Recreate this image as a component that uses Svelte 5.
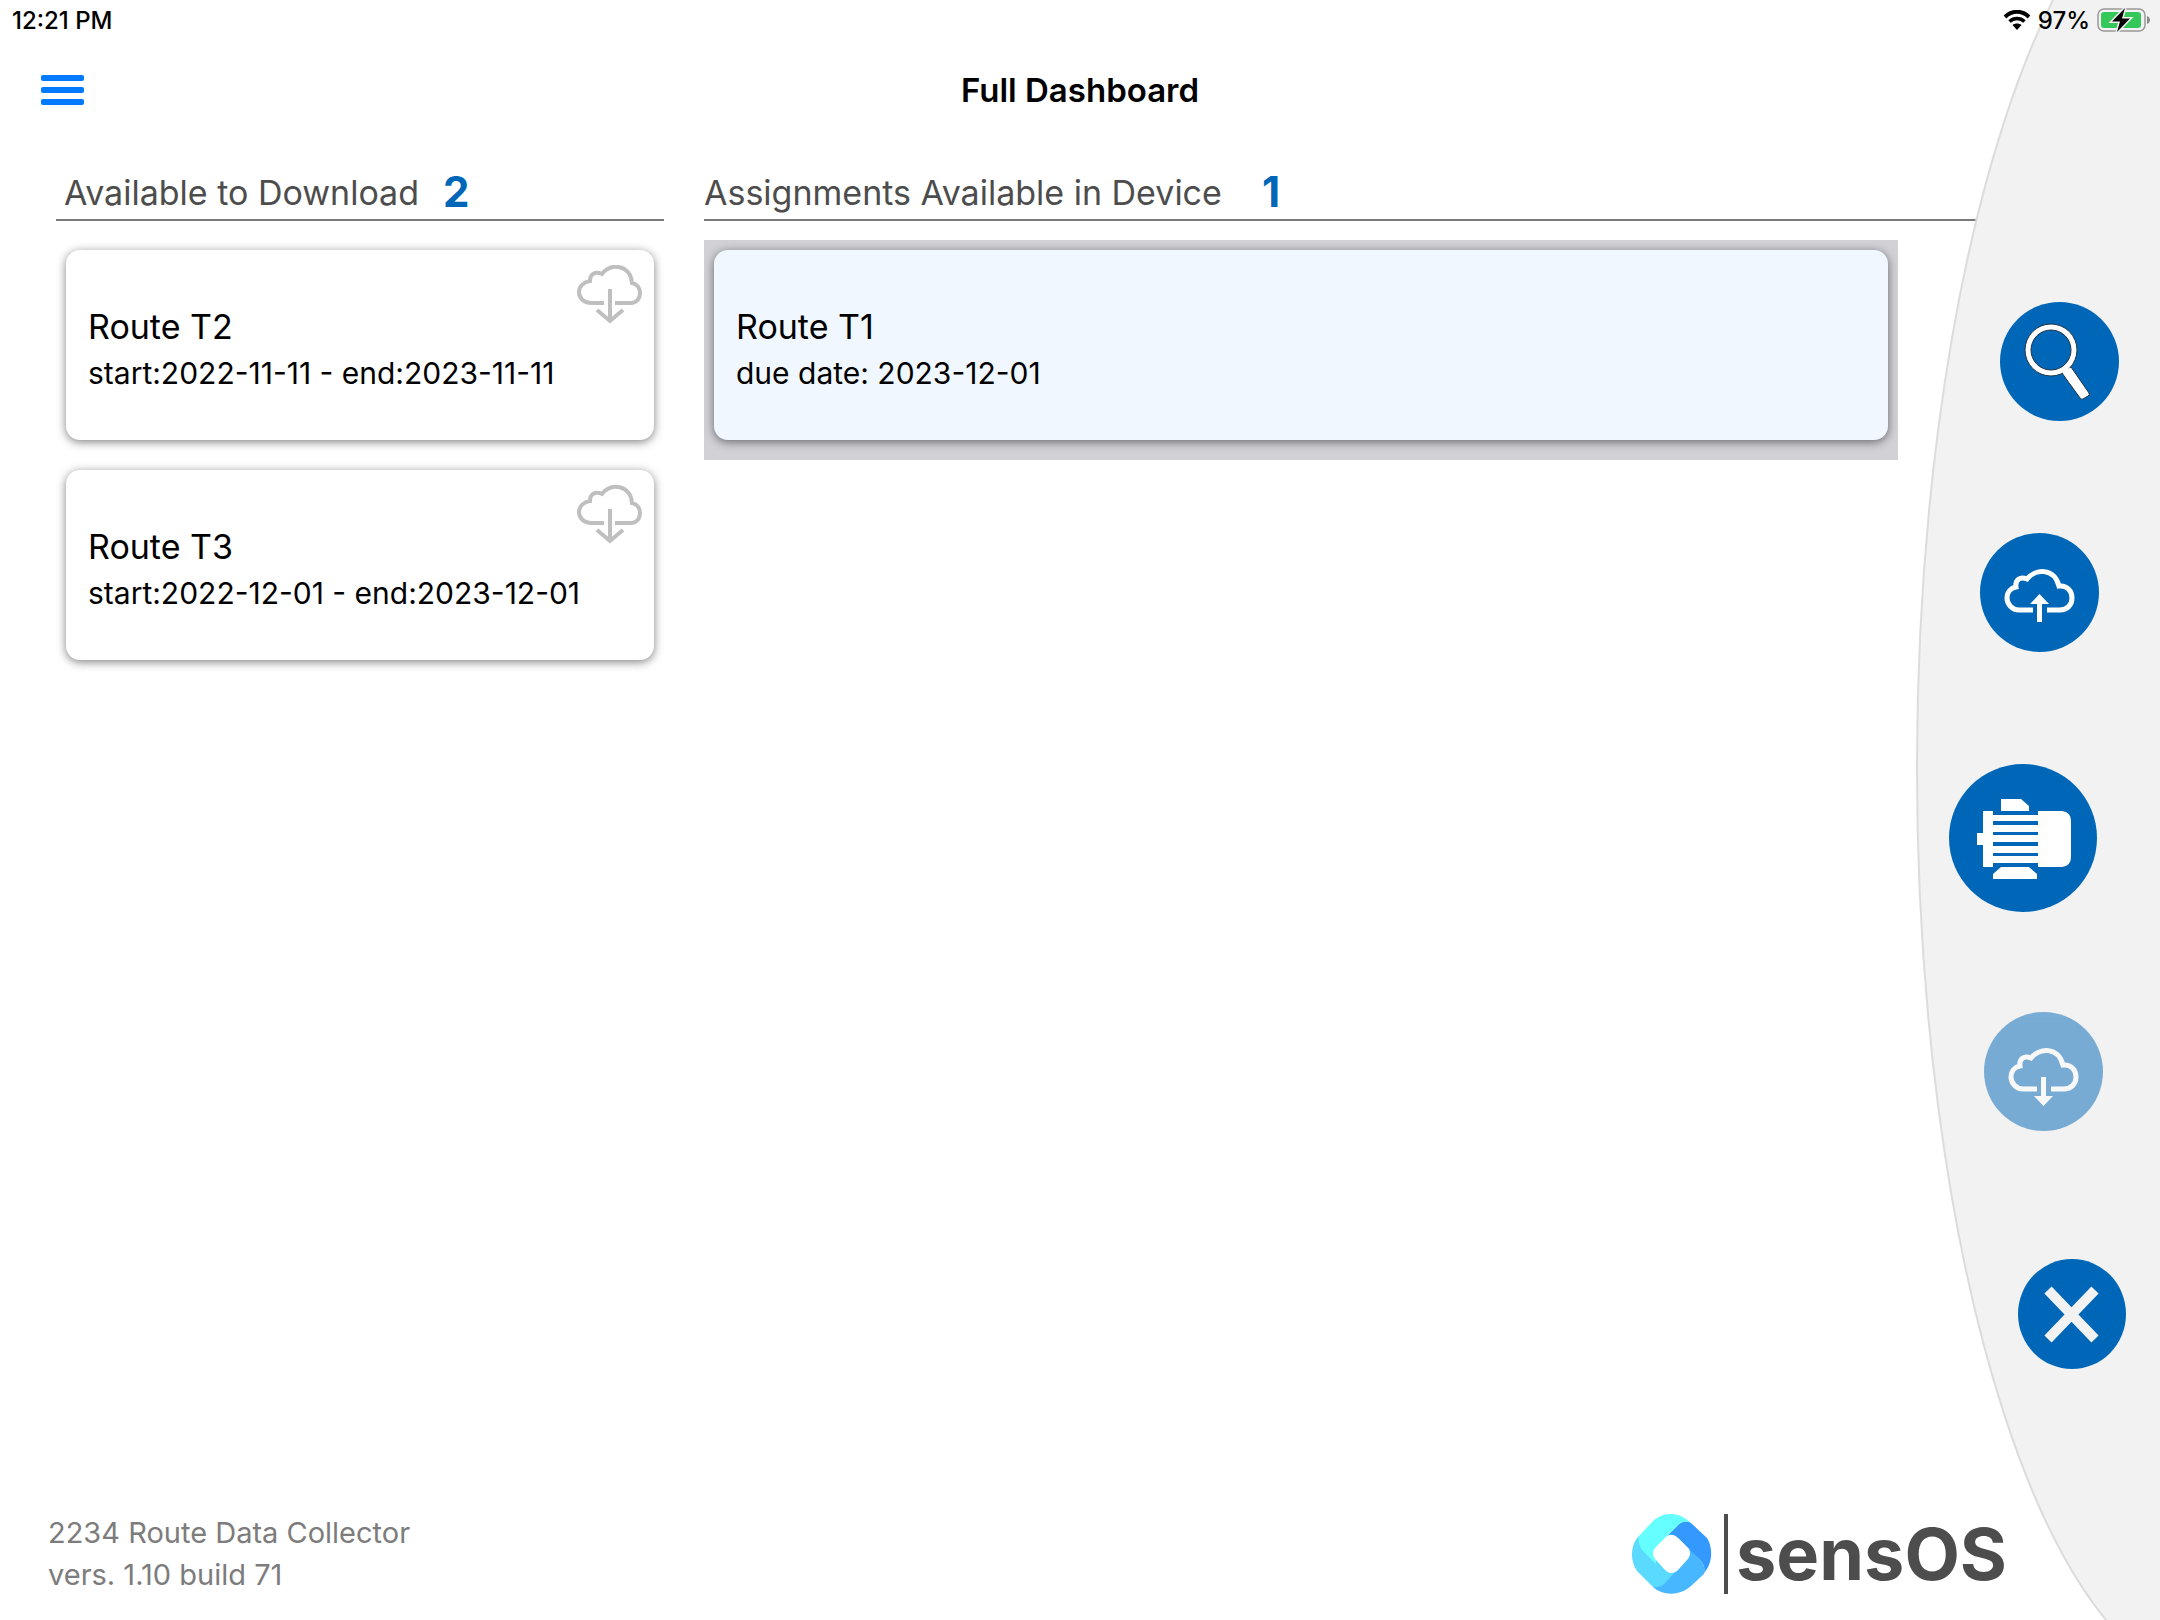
<script>
  let downloads = [
    { name: "Route T2", start: "2022-11-11", end: "2023-11-11" },
    { name: "Route T3", start: "2022-12-01", end: "2023-12-01" }
  ];

  let assignments = [{ name: "Route T1", due: "2023-12-01" }];

  let selected = 0;

  const cloud =
    "M53 77H39C32 77 27 71 27 65C27 59 31 55 36 54C35 47 40 43 47 46C55 36 74 34 79 53C87 52 92 58 92 65C92 72 87 77 80 77H67";
</script>

<div class="screen">
  <div class="status">
    <span>12:21 PM</span>
    <div class="status-right">
      <svg width="28" height="20" viewBox="0 0 28 20" aria-hidden="true">
        <path d="M2 7C9 0 19 0 26 7" fill="none" stroke="#000" stroke-width="4" />
        <path d="M6.500 11.500C11 7.500 17 7.500 21.500 11.500" fill="none" stroke="#000" stroke-width="3.600" />
        <path d="M9.500 15C12 13 16 13 18.500 15L14 20Z" />
      </svg>
      <span>97%</span>
      <svg width="54" height="26" viewBox="0 0 54 26" aria-hidden="true">
        <rect x="1" y="2" width="47" height="22" rx="6" fill="none" stroke="#999" stroke-width="1.500" />
        <rect x="4" y="5" width="40" height="16" rx="3" fill="#34c759" />
        <path d="M50 9C54 11 54 15 50 17Z" fill="#888" />
        <path d="M28 1L15 14.500H23L20 25L33 11.500H25Z" stroke="#f2f2f2" stroke-width="3" paint-order="stroke" />
      </svg>
    </div>
  </div>

  <header>
    <button type="button" class="menu" aria-label="Menu">
      <span></span>
      <span></span>
      <span></span>
    </button>
    <h1>Full Dashboard</h1>
  </header>

  <main>
    <section>
      <div class="heading">
        <h2>Available to Download</h2>
        <strong>{downloads.length}</strong>
      </div>
      {#each downloads as route}
        <div class="row">
          <div class="card">
            <h3>{route.name}</h3>
            <p>start:{route.start} - end:{route.end}</p>
            <button type="button" class="get" aria-label="Download {route.name}">
              <svg width="66" height="60" viewBox="0 0 66 60">
                <path d="M27 38H14C7 38 2 33 2 27C2 21 7 17 13 16C13 9 18 6 25 9C33 -3 54 0 55 18C60 19 63 23 63 28C63 34 59 38 54 38H38" />
                <path d="M33 24V56M20 45L33 56L46 45" />
              </svg>
            </button>
          </div>
        </div>
      {/each}
    </section>

    <section class="device">
      <div class="heading">
        <h2>Assignments Available in Device</h2>
        <strong>{assignments.length}</strong>
      </div>
      {#each assignments as route, i}
        <div class="row" class:selected={i === selected}>
          <div class="card">
            <h3>{route.name}</h3>
            <p>due date: {route.due}</p>
          </div>
        </div>
      {/each}
    </section>
  </main>

  <footer>
    <p>2234 Route Data Collector<br />vers. 1.10 build 71</p>
    <div class="brand">
      <svg width="80" height="80" viewBox="0 0 80 80" aria-hidden="true">
        <path fill="#5bdaff" d="M7 22C-2 31 -2 47 5 57L21 73C26 74 30 73 33 70L46 56L24 33L13 22Z" />
        <path fill="#47b8ff" d="M58 35L68 46C72 50 73 54 72 60L59 72C48 82 31 82 21 73C26 73 30 73 33 69L45 56Z" />
        <path fill="#3399ff" d="M59 9C54 6 49 8 46 11L34 23L46 24L68 46C72 50 73 54 72 59C81 49 81 33 75 24Z" />
        <path fill="#66ffff" d="M59 9C47 -3 31 -3 20 8L7 22C6 29 8 34 12 38L24 50L24 33L46 11C50 7 55 7 59 9Z" />
        <path fill="#fff" d="M34 23C37 20 42 20 46 24L55 33C59 37 59 42 55 46L46 56C42 60 37 60 33 56L24 46C20 42 20 37 24 33Z" />
      </svg>
      <i></i>
      <span>sensOS</span>
    </div>
  </footer>

  <aside>
    <svg class="curve" viewBox="0 0 244 1620" preserveAspectRatio="none" aria-hidden="true">
      <ellipse cx="301" cy="768" rx="300" ry="917" fill="#f2f2f2" stroke="#dcdcdc" stroke-width="2" />
    </svg>
    <button type="button" class="search" aria-label="Search">
      <svg viewBox="0 0 119 119">
        <g stroke="#234" stroke-width="1" fill="#fff">
          <path d="M62 71L71 65L89 91Q90 93 88 94L83 97Q82 98 80 96Z" />
          <path fill-rule="evenodd" d="M51 22A26 26 0 1 1 51 74A26 26 0 1 1 51 22ZM51 28A20 20 0 1 0 51 68A20 20 0 1 0 51 28Z" />
        </g>
        <path d="M66 68L74 80" stroke="#fff" stroke-width="8" />
      </svg>
    </button>
    <button type="button" class="upload" aria-label="Upload">
      <svg viewBox="0 0 119 119">
        <path d={cloud} fill="none" stroke="#fff" stroke-width="5" />
        <path d="M59.500 61L69 71H62V89H57V71H50Z" fill="#fff" />
      </svg>
    </button>
    <button type="button" class="machine" aria-label="Machines">
      <svg viewBox="0 0 148 148" fill="#fff">
        <path d="M52 35H72L80 42V47H52Z" />
        <path d="M28 69H34V47H44V103H34V81H28Z" />
        <path d="M44 51H89V57H44ZM44 61H89V68H44ZM44 71H89V78H44ZM44 82H89V89H44ZM44 92H89V99H44Z" />
        <path d="M89 47H113Q122 48 122 57V93Q122 102 113 103H89Z" />
        <path d="M52 103H80L88 110V115H44V110Z" />
      </svg>
    </button>
    <button type="button" class="download" aria-label="Download" disabled>
      <svg viewBox="0 0 119 119">
        <path d={cloud} fill="none" stroke="#fff" stroke-width="5" />
        <path d="M57 65H62V84H69L59.500 94L50 84H57Z" fill="#fff" />
      </svg>
    </button>
    <button type="button" class="close" aria-label="Close">
      <svg viewBox="0 0 108 110">
        <path d="M30 31L77 80M77 31L30 80" stroke="#f2f2f2" stroke-width="10" />
      </svg>
    </button>
  </aside>
</div>

<style>
  :global(body) {
    margin: 0;
    background: #fff;
  }

  .screen {
    position: relative;
    display: flex;
    flex-direction: column;
    min-height: 100vh;
    overflow: hidden;
    color: #000;
    font-family: Inter, "Liberation Sans", sans-serif;
  }

  h1, h2, h3, p {
    margin: 0;
    font-weight: 400;
  }

  button {
    padding: 0;
    border: 0;
    background: none;
    cursor: pointer;
  }

  svg {
    display: block;
  }

  .status {
    position: relative;
    z-index: 2;
    display: flex;
    justify-content: space-between;
    align-items: center;
    height: 40px;
    padding: 0 9px 0 12px;
    font-size: 24px;
    font-weight: 500;
  }

  .status-right {
    display: flex;
    align-items: center;
    gap: 7px;
  }

  header {
    display: grid;
    grid-template-columns: 1fr auto 1fr;
    align-items: center;
    height: 100px;
    padding: 0 41px;
  }

  .menu {
    display: flex;
    flex-direction: column;
    justify-self: start;
    gap: 6px;
    width: 43px;
  }

  .menu span {
    height: 6px;
    border-radius: 2px;
    background: #007aff;
  }

  h1 {
    font-size: 33px;
    font-weight: 600;
  }

  main {
    display: flex;
    flex: 1;
    gap: 40px;
    padding: 31px 0 0 56px;
  }

  section {
    width: 608px;
  }

  .device {
    flex: 1;
  }

  .heading {
    display: flex;
    align-items: center;
    gap: 24px;
    height: 42px;
    margin-bottom: 19px;
    padding: 0 0 6px 8px;
    border-bottom: 2px solid #7a7a7a;
  }

  .device .heading {
    gap: 40px;
    padding-left: 0;
  }

  h2 {
    color: #4d4d4d;
    font-size: 34px;
  }

  strong {
    color: #0067b8;
    font-size: 42px;
    line-height: 42px;
  }

  .row {
    padding: 10px 10px 20px;
  }

  .device .row {
    margin-right: 262px;
  }

  .selected {
    background: #d1d1d6;
  }

  .card {
    position: relative;
    display: flex;
    flex-direction: column;
    justify-content: center;
    height: 190px;
    padding: 0 22px;
    border-radius: 14px;
    background: #fff;
    box-shadow: 0 2px 10px rgba(0, 0, 0, 0.5);
    box-sizing: border-box;
  }

  .selected .card {
    background: #f0f7ff;
  }

  h3 {
    font-size: 34px;
    line-height: 56px;
  }

  .card p {
    font-size: 30px;
    line-height: 36px;
  }

  .get {
    position: absolute;
    top: 15px;
    right: 11px;
  }

  .get path {
    fill: none;
    stroke: #bfbfbf;
    stroke-width: 4;
  }

  footer {
    display: flex;
    justify-content: space-between;
    align-items: center;
    padding: 0 153px 24px 48px;
  }

  footer p {
    color: #7c7c7c;
    font-size: 29px;
    line-height: 42px;
  }

  .brand {
    display: flex;
    align-items: center;
    color: #4d4d4d;
    font-size: 72px;
    font-weight: 700;
    line-height: 80px;
  }

  .brand i {
    width: 4px;
    height: 80px;
    margin: 0 8px 0 12px;
    background: #4d4d4d;
  }

  aside {
    position: absolute;
    top: 0;
    right: 0;
    bottom: 0;
    display: flex;
    flex-direction: column;
    align-items: flex-start;
    width: 244px;
    padding-top: 302px;
    box-sizing: border-box;
  }

  .curve {
    position: absolute;
    inset: 0;
    width: 100%;
    height: 100%;
  }

  aside button {
    position: relative;
    width: 119px;
    height: 119px;
    border-radius: 50%;
    background: #0067b8;
  }

  .search {
    margin-left: 84px;
  }

  .upload {
    margin: 112px 0 0 64px;
  }

  .machine {
    width: 148px;
    height: 148px;
    margin: 112px 0 0 33px;
  }

  .download {
    margin: 100px 0 0 68px;
    opacity: 0.5;
  }

  .close {
    width: 108px;
    height: 110px;
    margin: 128px 0 0 102px;
  }
</style>
